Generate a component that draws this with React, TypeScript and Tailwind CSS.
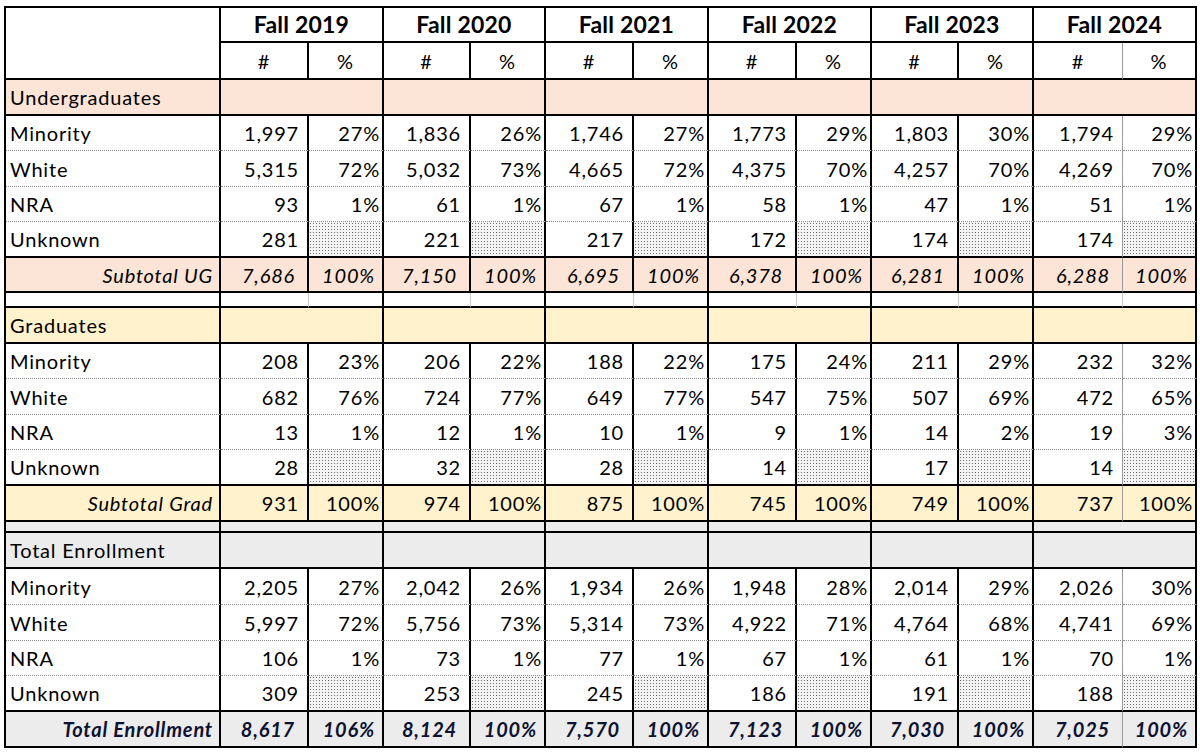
import clsx from "clsx"

type Row = { label: string; vals: [string, string][] }

const years = ["Fall 2019", "Fall 2020", "Fall 2021", "Fall 2022", "Fall 2023", "Fall 2024"]

const ug: Row[] = [
  { label: "Minority", vals: [["1,997", "27%"], ["1,836", "26%"], ["1,746", "27%"], ["1,773", "29%"], ["1,803", "30%"], ["1,794", "29%"]] },
  { label: "White", vals: [["5,315", "72%"], ["5,032", "73%"], ["4,665", "72%"], ["4,375", "70%"], ["4,257", "70%"], ["4,269", "70%"]] },
  { label: "NRA", vals: [["93", "1%"], ["61", "1%"], ["67", "1%"], ["58", "1%"], ["47", "1%"], ["51", "1%"]] },
  { label: "Unknown", vals: [["281", ""], ["221", ""], ["217", ""], ["172", ""], ["174", ""], ["174", ""]] },
]
const ugTotal = ["7,686", "7,150", "6,695", "6,378", "6,281", "6,288"]

const grad: Row[] = [
  { label: "Minority", vals: [["208", "23%"], ["206", "22%"], ["188", "22%"], ["175", "24%"], ["211", "29%"], ["232", "32%"]] },
  { label: "White", vals: [["682", "76%"], ["724", "77%"], ["649", "77%"], ["547", "75%"], ["507", "69%"], ["472", "65%"]] },
  { label: "NRA", vals: [["13", "1%"], ["12", "1%"], ["10", "1%"], ["9", "1%"], ["14", "2%"], ["19", "3%"]] },
  { label: "Unknown", vals: [["28", ""], ["32", ""], ["28", ""], ["14", ""], ["17", ""], ["14", ""]] },
]
const gradTotal = ["931", "974", "875", "745", "749", "737"]

const all: Row[] = [
  { label: "Minority", vals: [["2,205", "27%"], ["2,042", "26%"], ["1,934", "26%"], ["1,948", "28%"], ["2,014", "29%"], ["2,026", "30%"]] },
  { label: "White", vals: [["5,997", "72%"], ["5,756", "73%"], ["5,314", "73%"], ["4,922", "71%"], ["4,764", "68%"], ["4,741", "69%"]] },
  { label: "NRA", vals: [["106", "1%"], ["73", "1%"], ["77", "1%"], ["67", "1%"], ["61", "1%"], ["70", "1%"]] },
  { label: "Unknown", vals: [["309", ""], ["253", ""], ["245", ""], ["186", ""], ["191", ""], ["188", ""]] },
]
const allTotal: [string, string][] = [["8,617", "106%"], ["8,124", "100%"], ["7,570", "100%"], ["7,123", "100%"], ["7,030", "100%"], ["7,025", "100%"]]

const hatch =
  "bg-[radial-gradient(circle,#6f6f6f_0.75px,transparent_1px)] bg-[length:3px_3px] bg-[#f4f4f4]"

// right border of a "#" cell: black except the last year, which is a thin grey line
function numRight(i: number) {
  return i === 5 ? "border-r border-r-[#9a9a9a]" : "border-r-2 border-r-black"
}

function DataRows({ rows }: { rows: Row[] }) {
  return (
    <>
      {rows.map((r, ri) => {
        const last = ri === rows.length - 1
        const bottom = last
          ? "border-b-2 border-b-black"
          : "border-b [border-bottom-style:dotted] border-b-[#8c8c8c]"
        return (
          <div key={r.label} className="contents">
            <div className={clsx("flex items-center pl-[4px] border-r-2 border-r-black", bottom)}>{r.label}</div>
            {r.vals.map(([n, p], i) => (
              <div key={i} className="contents">
                <div className={clsx("flex items-center justify-end pr-[8px] bg-white", numRight(i), bottom)}>{n}</div>
                <div className={clsx("flex items-center justify-end pr-[2px] border-r-2 border-r-black", bottom, p === "" ? hatch : "bg-white")}>{p}</div>
              </div>
            ))}
          </div>
        )
      })}
    </>
  )
}

function SectionHead({ label, bg }: { label: string; bg: string }) {
  return (
    <>
      <div className={clsx("flex items-center pl-[4px] border-r-2 border-b-2 border-black", bg)}>{label}</div>
      {years.map((y) => (
        <div key={y} className={clsx("col-span-2 border-r-2 border-b-2 border-black", bg)} />
      ))}
    </>
  )
}

export default function App() {
  return (
    <div className="w-[1200px] h-[754px] bg-white pl-[4px] pt-[6px] font-['Lato',sans-serif] text-[20px] tracking-[0.8px] text-black">
      <div className="grid w-fit border-l-2 border-t-2 border-black grid-cols-[215px_88px_75px_87px_75px_88px_75px_88px_75px_87px_75px_89px_74px] grid-rows-[35px_37px_36px_35px_36px_35px_36px_35px_15px_36px_35px_36px_35px_36px_36px_11px_36px_36px_36px_35px_36px_36px]">
        {/* header */}
        <div className="row-span-2 border-r-2 border-b-2 border-black" />
        {years.map((y) => (
          <div key={y} className="col-span-2 flex items-center justify-center border-r-2 border-b-2 border-black text-[23px] font-bold tracking-[0.2px]">
            {y}
          </div>
        ))}
        {years.map((y, i) => (
          <div key={y} className="contents">
            <div className={clsx("flex items-center justify-center border-b-2 border-b-black", numRight(i))}>#</div>
            <div className="flex items-center justify-center border-r-2 border-b-2 border-black">%</div>
          </div>
        ))}

        {/* undergraduates */}
        <SectionHead label="Undergraduates" bg="bg-[#fce4d6]" />
        <DataRows rows={ug} />
        <div className="flex items-center justify-end pr-[6px] italic border-r-2 border-b-2 border-black bg-[#fce4d6]">Subtotal UG</div>
        {ugTotal.map((n, i) => (
          <div key={i} className="contents">
            <div className={clsx("flex items-center justify-end pr-[12px] italic bg-[#fce4d6] border-b-2 border-b-black", numRight(i))}>{n}</div>
            <div className="flex items-center justify-end pr-[7px] italic bg-[#fce4d6] border-r-2 border-b-2 border-black">100%</div>
          </div>
        ))}
        <div className="border-r-2 border-b-2 border-black" />
        {years.map((y) => (
          <div key={y} className="contents">
            <div className="border-r border-r-[#c8c8c8] border-b-2 border-b-black" />
            <div className="border-r-2 border-b-2 border-black" />
          </div>
        ))}

        {/* graduates */}
        <SectionHead label="Graduates" bg="bg-[#fff2cc]" />
        <DataRows rows={grad} />
        <div className="flex items-center justify-end pr-[6px] italic border-r-2 border-b-2 border-black bg-[#fff2cc]">Subtotal Grad</div>
        {gradTotal.map((n, i) => (
          <div key={i} className="contents">
            <div className={clsx("flex items-center justify-end pr-[8px] bg-[#fff2cc] border-b-2 border-b-black", numRight(i))}>{n}</div>
            <div className="flex items-center justify-end pr-[2px] bg-[#fff2cc] border-r-2 border-b-2 border-black">100%</div>
          </div>
        ))}
        <div className="border-r-2 border-b-2 border-black bg-[#ececec]" />
        {years.map((y) => (
          <div key={y} className="col-span-2 border-r-2 border-b-2 border-black bg-[#ececec]" />
        ))}

        {/* total enrollment */}
        <SectionHead label="Total Enrollment" bg="bg-[#ececec]" />
        <DataRows rows={all} />
        <div className="flex items-center justify-end pr-[6px] italic font-bold text-[#0d1230] border-r-2 border-b-2 border-black bg-[#ececec]">Total Enrollment</div>
        {allTotal.map(([n, p], i) => (
          <div key={i} className="contents">
            <div className={clsx("flex items-center justify-end pr-[12px] italic font-bold text-[#0d1230] bg-[#ececec] border-b-2 border-b-black", numRight(i))}>{n}</div>
            <div className="flex items-center justify-end pr-[7px] italic font-bold text-[#0d1230] bg-[#ececec] border-r-2 border-b-2 border-black">{p}</div>
          </div>
        ))}
      </div>
    </div>
  )
}
